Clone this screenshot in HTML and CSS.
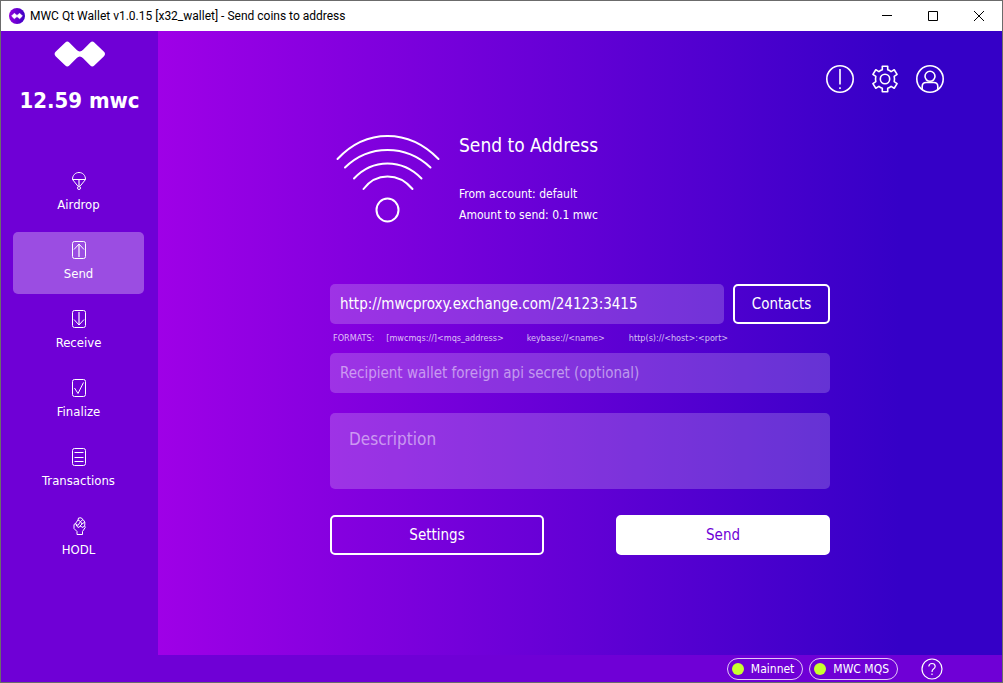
FILE: index.html
```html
<!DOCTYPE html>
<html lang="en">
<head>
<meta charset="utf-8">
<title>MWC Qt Wallet</title>
<link rel="stylesheet" href="styles.css">
</head>
<body>
<div class="window">
  <header class="titlebar">
    <svg class="app-icon" viewBox="0 0 16 16" width="16" height="16"><defs><linearGradient id="g"><stop offset="0" stop-color="#9400dd"/><stop offset="1" stop-color="#3a00c4"/></linearGradient></defs><circle cx="8" cy="8" r="8" fill="url(#g)"/><path d="M2.6 8 5.3 5.3 8 7.4 10.700 5.300 13.400 8 10.700 10.700 8 8.600 5.300 10.700Z" fill="#fff" stroke="#fff" stroke-width=".6" stroke-linejoin="round"/></svg>
    <h1 class="window-title">MWC Qt Wallet v1.0.15 [x32_wallet] - Send coins to address</h1>
    <div class="window-controls">
      <button class="window-button" aria-label="Minimize"><svg width="10" height="10"><path d="M0 4.500h10"/></svg></button>
      <button class="window-button" aria-label="Maximize"><svg width="10" height="10"><path d="M.5.5h9v9h-9z"/></svg></button>
      <button class="window-button" aria-label="Close"><svg width="10" height="10"><path d="M0 0 10 10M10 0 0 10"/></svg></button>
    </div>
  </header>
  <div class="body">
    <aside class="sidebar">
      <svg class="logo" viewBox="0 0 52 26" width="52" height="26"><path d="M11.300 1.600Q13.300-.4 15.300 1.600L22.500 8.800Q25.800 12 29.100 8.800L36.300 1.600Q38.300-.4 40.300 1.600L50 10.800Q52 13 50 15.200L40.300 24.400Q38.300 26.400 36.300 24.400L29.100 17.200Q25.800 14 22.500 17.200L15.300 24.400Q13.300 26.400 11.300 24.400L1.600 15.200Q-.4 13 1.600 10.800Z" fill="#fff"/></svg>
      <p class="balance">12.59 mwc</p>
      <nav class="nav">
        <a class="nav-item" href="#"><svg class="nav-icon" viewBox="0 0 14 18"><path d="M.5 7.500C.5 3.300 3.300.5 7 .5s6.500 2.800 6.500 7zM.5 7.500 6.200 14.500M13.500 7.500 7.800 14.500"/><path d="M7 8v6" opacity=".65" stroke-width="1.800"/><circle cx="7" cy="16" r="1.500"/></svg>Airdrop</a>
        <a class="nav-item active" href="#"><svg class="nav-icon" viewBox="0 0 14 18"><rect x=".5" y=".5" width="13" height="17" rx="2"/><path d="M7 3v13" opacity=".65" stroke-width="1.800"/><path d="M2 8.500 7 3l5 5.500"/></svg>Send</a>
        <a class="nav-item" href="#"><svg class="nav-icon" viewBox="0 0 14 18"><rect x=".5" y=".5" width="13" height="17" rx="2"/><path d="M7 2v13" opacity=".65" stroke-width="1.800"/><path d="M2 9.500 7 15l5-5.500"/></svg>Receive</a>
        <a class="nav-item" href="#"><svg class="nav-icon" viewBox="0 0 14 18"><rect x=".5" y=".5" width="13" height="17" rx="2"/><path d="m2.500 9 3.500 5.500L11.500 3.500"/></svg>Finalize</a>
        <a class="nav-item" href="#"><svg class="nav-icon" viewBox="0 0 14 18"><rect x=".5" y=".5" width="13" height="17" rx="2"/><path d="M2.500 4.500h9M2.500 9.500h9M2.500 13.500h9"/></svg>Transactions</a>
        <a class="nav-item" href="#"><svg class="nav-icon" viewBox="0 0 14 18"><path d="M5 17.500V14.500L2 11.500V7.500L3.500 6.500 5 9.500 7 10.500 8 9 11 10.500 12.500 8.500 13.200 10.500 10.500 14.500V17.500ZM3.500 6.500 6 3 8.500 4.500 6 8.500ZM6 3 6.500 1 9 .8 11 2.500 8.500 4.500M11 2.500 12.800 5 10 7 8 9M12.800 5V8.500M8.500 4.500 10 7"/></svg>HODL</a>
      </nav>
    </aside>
    <main class="main">
      <div class="toolbar">
        <button class="tool" aria-label="Notifications"><svg viewBox="0 0 28 28"><circle cx="14" cy="14" r="13.200"/><path d="M14 4v15.500M14 22.200v1.800"/></svg></button>
        <button class="tool" aria-label="Settings"><svg viewBox="0 0 28 28"><circle cx="14" cy="14" r="4.700"/><path d="M11.300 1.200h5.400v3.600q1.900.6 3.400 1.800l3.100-1.800 2.900 4.600-2.900 1.900q.6 2.700 0 5.400l2.900 1.900-2.900 4.600-3.100-1.800q-1.500 1.200-3.400 1.800v3.600h-5.400v-3.600q-1.900-.6-3.400-1.800l-3.100 1.800-2.900-4.600 2.900-1.900q-.6-2.700 0-5.400l-2.900-1.900 2.900-4.600 3.100 1.800q1.500-1.200 3.400-1.800Z"/></svg></button>
        <button class="tool" aria-label="Account"><svg viewBox="0 0 28 28"><circle cx="14" cy="14" r="13.200"/><circle cx="14" cy="11.300" r="5"/><path d="M6.200 24.300V21.500q0-4 4-4h7.600q4 0 4 4v2.800"/></svg></button>
      </div>
      <form class="form">
        <section class="intro">
          <svg class="wifi" viewBox="0 0 104 90" width="104" height="90"><path d="M1.500 25Q23 2 51.500 2t51 23M9 33.500Q27 16 51.500 16t43 17.500M18 44.500Q32 29.500 51.500 29.500t34 15M27.500 55Q37 42.500 51.500 42.500t25 12.500"/><ellipse cx="51.500" cy="76" rx="11" ry="11.500"/></svg>
          <div class="intro-text">
            <h2 class="heading">Send to Address</h2>
            <p class="detail">From account: default</p>
            <p class="detail">Amount to send: 0.1 mwc</p>
          </div>
        </section>
        <div class="address-row">
          <input class="field" type="text" aria-label="Address" value="http://mwcproxy.exchange.com/24123:3415">
          <button class="button contacts" type="button">Contacts</button>
        </div>
        <div class="formats"><span>FORMATS:</span><span class="format-mqs">[mwcmqs://]&lt;mqs_address&gt;</span><span class="format-key">keybase://&lt;name&gt;</span><span>http(s)://&lt;host&gt;:&lt;port&gt;</span></div>
        <input class="field" type="text" aria-label="API secret" placeholder="Recipient wallet foreign api secret (optional)">
        <textarea class="field description" aria-label="Description" placeholder="Description"></textarea>
        <div class="actions">
          <button class="button" type="button">Settings</button>
          <button class="button primary" type="button">Send</button>
        </div>
      </form>
    </main>
  </div>
  <footer class="statusbar">
    <button class="status"><span class="dot"></span>Mainnet</button>
    <button class="status"><span class="dot"></span>MWC MQS</button>
    <button class="help" aria-label="Help"><svg viewBox="0 0 22 22"><circle cx="11" cy="11" r="10"/><path d="M7.800 8.500Q8 5.500 11 5.500t3.200 2.800Q14.200 10 12.500 11 11 12 11 14M11 15.500v1.500"/></svg></button>
  </footer>
</div>
</body>
</html>
```
FILE: styles.css
```css
* { box-sizing: border-box; }
body, h1, h2, p { margin: 0; }
body { font-family: "DejaVu Sans Condensed", "DejaVu Sans", sans-serif; font-stretch: condensed; color: #fff; }
button, input, textarea { font: inherit; color: inherit; }
button { padding: 0; border: 0; background: none; }
svg { display: block; }

.window { display: flex; flex-direction: column; min-height: 100vh; border: 1px solid #6b6b6b; background: #6f00d6; }
.titlebar { display: flex; align-items: center; height: 30px; padding-left: 8px; background: #fff; color: #000; }
.window-title { margin-left: 5px; font: 400 12px Roboto, sans-serif; }
.window-controls { display: flex; height: 100%; margin-left: auto; }
.window-button { display: grid; place-items: center; width: 46px; }
.window-button svg { fill: none; stroke: #000; }

.body { display: flex; flex: 1; }
.sidebar { display: flex; flex-direction: column; align-items: center; flex: 0 0 157px; padding-top: 10px; }
.balance { margin-top: 20px; font-size: 22px; line-height: 28px; font-weight: 700; }
.nav { display: flex; flex-direction: column; gap: 7px; align-self: stretch; margin: 48px 14px 0 12px; }
.nav-item { display: flex; flex-direction: column; align-items: center; gap: 7px; height: 62px; padding-top: 9px; border-radius: 5px; color: #fff; font-size: 13px; line-height: 16px; text-decoration: none; }
.nav-item.active { background: #9b4de2; }
.nav-icon { width: 14px; height: 18px; fill: none; stroke: #fff; stroke-width: 1; stroke-linejoin: round; }

.main { flex: 1; background: linear-gradient(90deg, #9f00e7, #3500c7 88%); }
.toolbar { display: flex; justify-content: flex-end; gap: 17px; padding: 34px 58px 0 0; }
.tool { width: 28px; height: 28px; }
.tool svg { fill: none; stroke: #fff; stroke-width: 1.6; stroke-linejoin: round; }

.form { display: flex; flex-direction: column; max-width: 500px; margin: 40px auto 0; }
.intro { display: flex; gap: 19px; height: 151px; padding-left: 6px; }
.wifi { margin-top: 1px; fill: none; stroke: #fff; stroke-width: 2; stroke-linecap: round; }
.heading { margin-bottom: 27px; font-size: 19px; line-height: 24px; font-weight: 400; }
.detail { font-size: 12px; line-height: 21px; }
.address-row { display: flex; gap: 9px; }
.field { width: 100%; min-width: 0; height: 40px; padding: 0 10px; border: 0; border-radius: 5px; background: rgba(255, 255, 255, .2); font-size: 15px; outline: 0; }
.field::placeholder { color: rgba(255, 255, 255, .5); opacity: 1; }
.description { display: block; height: 76px; margin-top: 20px; padding: 13px 19px; font-size: 17px; line-height: 26px; resize: none; }
.button { flex: 1; height: 40px; border: 2px solid #fff; border-radius: 5px; font-size: 15px; }
.contacts { flex: 0 0 97px; }
.formats { display: flex; height: 29px; padding-left: 3px; font-size: 9px; line-height: 28px; color: rgba(255, 255, 255, .75); }
.formats span { margin-right: 12px; }
.formats .format-mqs { margin-right: 23px; }
.formats .format-key { margin-right: 24px; }
.actions { display: flex; gap: 72px; margin-top: 26px; }
.primary { background: #fff; color: #6f00d6; }

.statusbar { display: flex; align-items: center; justify-content: flex-end; gap: 6px; height: 27px; padding-right: 59px; }
.status { display: flex; align-items: center; gap: 7px; height: 22px; padding: 0 8px 0 4px; border: 1px solid #e2c8f7; border-radius: 11px; font-size: 12px; }
.dot { width: 12px; height: 12px; border-radius: 50%; background: #c8ff2e; }
.help { width: 22px; height: 22px; margin-left: 17px; }
.help svg { fill: none; stroke: #fff; stroke-width: 1.2; }
```
